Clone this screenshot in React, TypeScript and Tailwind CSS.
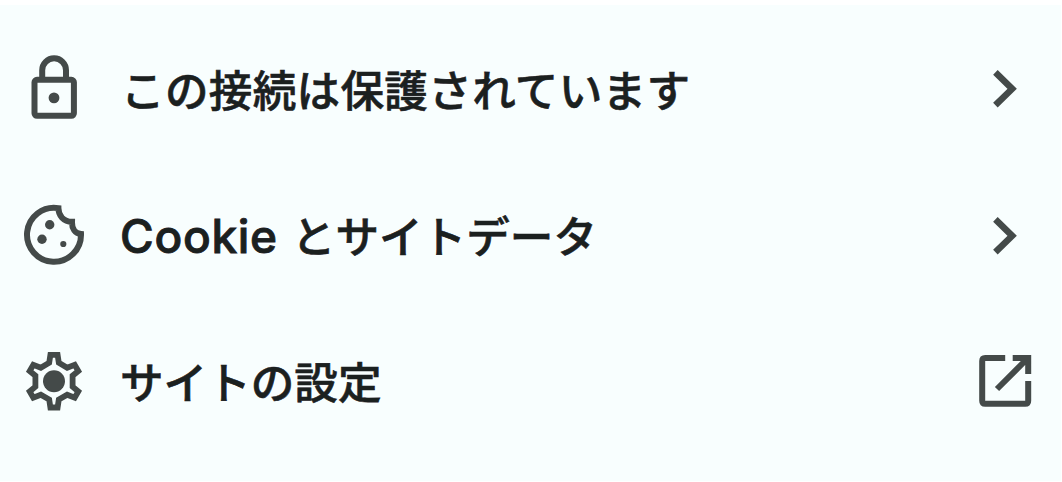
import { ReactNode } from "react";

type MenuRowProps = {
  icon: ReactNode;
  action: ReactNode;
  children: ReactNode;
};

type IconProps = {
  children: ReactNode;
};

function Icon({ children }: IconProps) {
  return (
    <svg
      className="h-[71px] w-16 shrink-0"
      viewBox="0 0 64 71"
      fill="none"
      stroke="currentColor"
      strokeWidth="6"
      aria-hidden="true"
    >
      {children}
    </svg>
  );
}

function LockIcon() {
  return (
    <Icon>
      <rect x="12.5" y="26.8" width="39.4" height="36" rx="2.5" />
      <path d="M20.2 26V17.2a11.9 11.9 0 0 1 23.8 0V26" />
      <circle cx="32" cy="44.9" r="5.4" fill="currentColor" stroke="none" />
    </Icon>
  );
}

function CookieIcon() {
  return (
    <Icon>
      <path d="M59 34A27 27 0 1 1 36.4 8.1C36.4 15.5 41.5 21.7 50 21.8C49.8 28.5 53 33.3 59 34Z" />
      <g fill="currentColor" stroke="none">
        <circle cx="27.7" cy="24.7" r="4.7" />
        <circle cx="20" cy="39.2" r="4.7" />
        <circle cx="41.3" cy="44" r="3.1" />
      </g>
    </Icon>
  );
}

function GearIcon() {
  return (
    <Icon>
      <path
        d="M28.4 7.9H35.6L36.8 15.8L45.2 20.7L52.7 17.8L56.3 24L50.6 28.7V39.7L56.3 44.4L52.7 50.6L45.2 47.7L36.8 52.6L35.6 60.5H28.4L27.2 52.6L18.8 47.7L11.3 50.6L7.7 44.4L13.4 39.7V28.7L7.7 24L11.3 17.8L18.8 20.7L27.2 15.8Z"
        strokeWidth="5.8"
      />
      <circle cx="32" cy="34.2" r="11" fill="currentColor" stroke="none" />
    </Icon>
  );
}

function ChevronIcon() {
  return (
    <Icon>
      <path d="M22.4 19.4L39.2 35.8L22.4 52.2" strokeWidth="6.5" />
    </Icon>
  );
}

function ExternalIcon() {
  return (
    <Icon>
      <path d="M32.2 11.1H12.2Q9.2 11.1 9.2 14.1V53.8Q9.2 56.8 12.2 56.8H52.2Q55.2 56.8 55.2 53.8V34" />
      <path d="M39.7 11.1H55.2V27M54 12L24 42" />
    </Icon>
  );
}

function MenuRow({ icon, action, children }: MenuRowProps) {
  return (
    <button className="flex h-[147px] w-full items-center pr-6 pl-[22px] text-left text-[#444a49]">
      {icon}
      <span className="ml-[35px] flex flex-1 items-baseline pb-[2px] text-[43.6px] leading-none font-medium whitespace-pre text-[#1b201f] [-webkit-text-stroke:0.6px_#1b201f]">
        {children}
      </span>
      {action}
    </button>
  );
}

function App() {
  return (
    <div className="h-[482px] w-[1062px] bg-white pt-[5px] font-['Noto_Sans_CJK_JP',sans-serif]">
      <div className="h-[476px] w-[1061px] bg-[#f8fefe] pt-[10px]">
        <MenuRow icon={<LockIcon />} action={<ChevronIcon />}>
          <span className="pt-[2px] tracking-[0.3px]">
            この接続は保護されています
          </span>
        </MenuRow>
        <MenuRow icon={<CookieIcon />} action={<ChevronIcon />}>
          <span className="-ml-px pt-[2px] font-['Inter',sans-serif] text-[46px] tracking-[0.7px] [-webkit-text-stroke:0.9px_#1b201f]">
            Cookie
          </span>
          <span className="ml-[14px]">とサイトデータ</span>
        </MenuRow>
        <MenuRow icon={<GearIcon />} action={<ExternalIcon />}>
          <span className="-ml-px pb-[2px]">サイトの設定</span>
        </MenuRow>
      </div>
    </div>
  );
}

export default App;
